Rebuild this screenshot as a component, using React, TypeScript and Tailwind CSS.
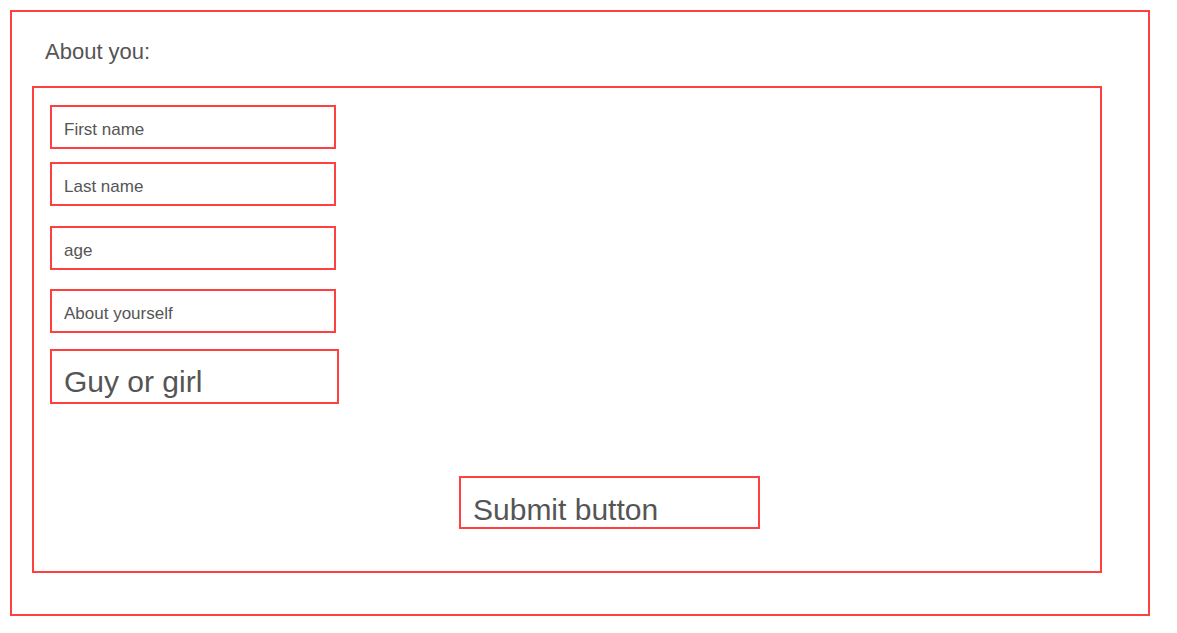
import React from 'react';

const fieldClass =
  'block w-[286px] h-[44px] border-2 border-[#ff4040] pl-[12px] pt-[5px] text-[17px] text-[#555] placeholder:text-[#555] outline-none bg-white';

export default function App() {
  return (
    <div className="min-h-[633px] bg-white font-['Liberation_Sans',Arial,sans-serif] text-[#555] pt-[10px] pl-[10px]">
      <div className="w-[1140px] h-[606px] border-2 border-[#ff4040]">
        <h2 className="pl-[33px] pt-[27px] text-[22px] leading-[26px] font-normal">About you:</h2>

        <form
          className="ml-[20px] mt-[21px] w-[1070px] h-[487px] border-2 border-[#ff4040] pl-[16px] pt-[17px] flex flex-col"
          onSubmit={(e) => e.preventDefault()}
        >
          <input type="text" placeholder="First name" className={fieldClass} />
          <input type="text" placeholder="Last name" className={`${fieldClass} mt-[13px]`} />
          <input type="number" placeholder="age" className={`${fieldClass} mt-[20px]`} />
          <input type="text" placeholder="About yourself" className={`${fieldClass} mt-[19px]`} />

          <div className="mt-[16px] w-[289px] h-[55px] border-2 border-[#ff4040] pl-[12px] pt-[15px] text-[30px] leading-[32px]">
            Guy or girl
          </div>

          <button
            type="submit"
            className="self-start ml-[409px] mt-[72px] w-[301px] h-[53px] border-2 border-[#ff4040] pl-[12px] pt-[15px] text-left text-[30px] leading-[32px] text-[#555] bg-white"
          >
            Submit button
          </button>
        </form>
      </div>
    </div>
  );
}
